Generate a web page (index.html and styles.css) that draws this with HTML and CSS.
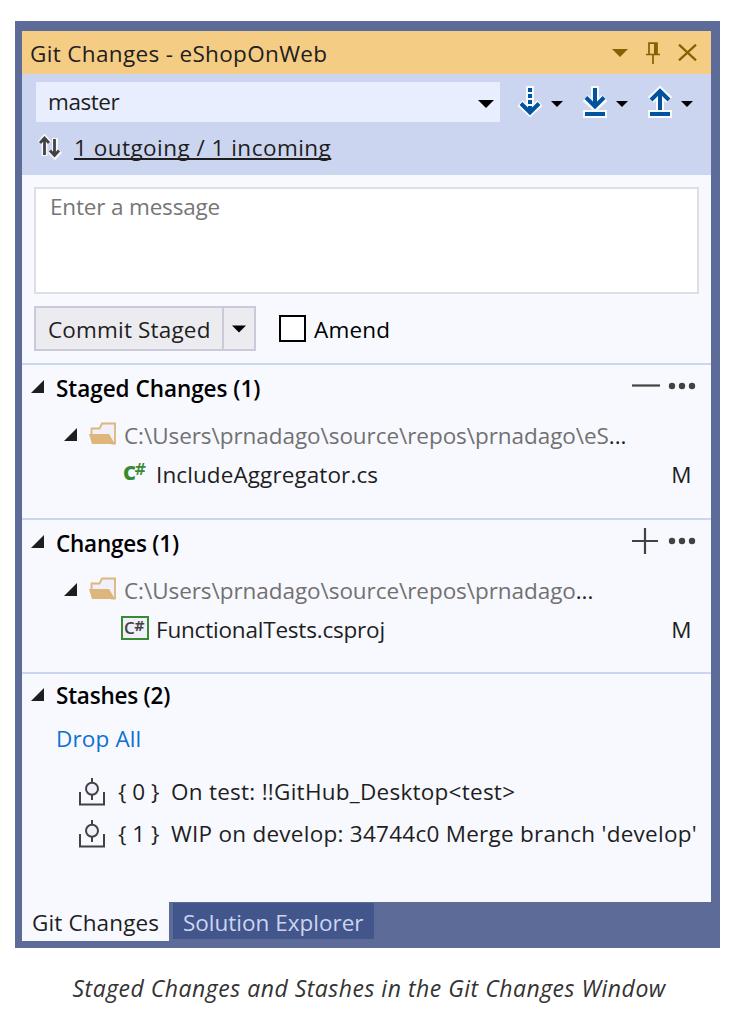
FILE: index.html
```html
<!DOCTYPE html>
<html lang="en">
<head>
<meta charset="utf-8">
<title>Git Changes</title>
<link rel="stylesheet" href="styles.css">
</head>
<body>
<svg class="defs" aria-hidden="true">
  <symbol id="folder" viewBox="0 0 28 24">
    <path d="M2.500 14V7.500h8l2.500-5h13v20h-3z" fill="#f0effa" stroke="#dcb67a" stroke-width="1.800"/>
    <path d="M0 13h20l6 10H3z" fill="#dcb67a"/>
  </symbol>
  <symbol id="stash" viewBox="0 0 26 28">
    <path d="M1 14v12.500h24V14M13 0v4.500M13 17v5" fill="none" stroke="#424242" stroke-width="2"/>
    <circle cx="13" cy="10.700" r="6" fill="#f0effa" stroke="#424242" stroke-width="2"/>
  </symbol>
  <symbol id="dots" viewBox="0 0 28 8">
    <circle cx="4" cy="4" r="3.200"/><circle cx="14" cy="4" r="3.200"/><circle cx="24" cy="4" r="3.200"/>
  </symbol>
  <symbol id="caret" viewBox="0 0 16 8"><path d="M0 0h16L8 8z"/></symbol>
  <symbol id="expanded" viewBox="0 0 13 13"><path d="M13 0v13H0z"/></symbol>
</svg>
<figure class="figure">
  <div class="window">
    <header class="titlebar">
      <span class="t-title">Git Changes - eShopOnWeb</span>
      <div class="title-actions">
        <svg width="16" height="8"><use href="#caret"/></svg>
        <svg width="14" height="22" viewBox="0 0 14 22" fill="none" stroke="#865f00"><path d="M3 12V1.200h8V12M0 12.500h14M7 13v9" stroke-width="1.700"/><path d="M9.500 1v11" stroke-width="3"/></svg>
        <svg width="19" height="17" viewBox="0 0 19 17"><path d="M1 .7l17 15.600M18 .7L1 16.300" stroke="#865f00" stroke-width="2.300"/></svg>
      </div>
    </header>
    <div class="toolbar">
      <div class="toolbar-row">
        <div class="branch"><span class="t-branch">master</span><svg width="16" height="8"><use href="#caret"/></svg></div>
        <div class="sync">
          <svg class="sync-icon" width="24" height="34" viewBox="0 0 24 34">
            <g fill="none" stroke="#f7f9fe" stroke-width="8"><path d="M12 1v25M2 18l10 9 10-9"/></g>
            <g fill="none" stroke="#00539c" stroke-width="4"><path d="M12 3v4M12 9v4M12 15v4M12 21v6M3 18.500l9 9 9-9"/></g>
          </svg>
          <svg class="small-caret" width="12" height="6"><use href="#caret"/></svg>
          <svg class="sync-icon" width="24" height="34" viewBox="0 0 24 34">
            <g fill="none" stroke="#f7f9fe" stroke-width="8"><path d="M12 1v20M2.500 13L12 22l9.500-9M0 29h24"/></g>
            <g fill="none" stroke="#00539c" stroke-width="4"><path d="M12 3v18M3 12.500l9 9 9-9M2 29h20"/></g>
          </svg>
          <svg class="small-caret" width="12" height="6"><use href="#caret"/></svg>
          <svg class="sync-icon" width="24" height="34" viewBox="0 0 24 34">
            <g fill="none" stroke="#f7f9fe" stroke-width="8"><path d="M12 25V5M2.500 15L12 6l9.500 9M0 29h24"/></g>
            <g fill="none" stroke="#00539c" stroke-width="4"><path d="M12 25V6M3 15l9-9 9 9M2 29h20"/></g>
          </svg>
          <svg class="small-caret" width="12" height="6"><use href="#caret"/></svg>
        </div>
      </div>
      <div class="status">
        <svg width="24" height="26" viewBox="0 0 24 26" fill="none">
          <path d="M6.500 22V4M2 9.500L6.500 4l4.500 5.500M17 4v18M12 17l5 5 5-5" stroke="#f5f6fb" stroke-width="6"/>
          <path d="M6.500 21V4M2 9l4.500-5L11 9M16.500 5v16M12 16.500l4.500 5 4.500-5" stroke="#424242" stroke-width="2.800"/>
        </svg>
        <a class="t-link">1 outgoing / 1 incoming</a>
      </div>
    </div>
    <main class="panel">
      <div class="message"><span class="t-msg">Enter a message</span></div>
      <div class="commit-row">
        <div class="commit"><span class="commit-label t-commit">Commit Staged</span><span class="commit-drop"><svg width="14" height="8"><use href="#caret"/></svg></span></div>
        <span class="checkbox"></span><span class="t-amend">Amend</span>
      </div>
      <section class="section">
        <div class="section-head">
          <svg class="tri" width="13" height="13"><use href="#expanded"/></svg><h2 class="t-staged">Staged Changes (1)</h2>
          <div class="section-actions"><svg width="28" height="28"><path d="M0 13.500h28" stroke="#424242" stroke-width="2.200"/></svg><svg width="28" height="8" fill="#424242"><use href="#dots"/></svg></div>
        </div>
        <div class="row folder-row"><svg class="tri" width="13" height="13"><use href="#expanded"/></svg><svg class="folder" width="28" height="24"><use href="#folder"/></svg><span class="path t-path1">C:\Users\prnadago\source\repos\prnadago\eS<b>...</b></span></div>
        <div class="row file-row"><span class="cs">C<i>#</i></span><span class="t-file1">IncludeAggregator.cs</span><span class="flag">M</span></div>
      </section>
      <section class="section changes">
        <div class="section-head">
          <svg class="tri" width="13" height="13"><use href="#expanded"/></svg><h2 class="t-changes">Changes (1)</h2>
          <div class="section-actions"><svg width="28" height="28"><path d="M0 14h26M13 1v26" stroke="#424242" stroke-width="2.200"/></svg><svg width="28" height="8" fill="#424242"><use href="#dots"/></svg></div>
        </div>
        <div class="row folder-row"><svg class="tri" width="13" height="13"><use href="#expanded"/></svg><svg class="folder" width="28" height="24"><use href="#folder"/></svg><span class="path t-path2">C:\Users\prnadago\source\repos\prnadago<b>...</b></span></div>
        <div class="row file-row"><span class="cs proj">C<i>#</i></span><span class="t-file2">FunctionalTests.csproj</span><span class="flag">M</span></div>
      </section>
      <section class="section stashes">
        <div class="section-head"><svg class="tri" width="13" height="13"><use href="#expanded"/></svg><h2 class="t-stashes">Stashes (2)</h2></div>
        <a class="drop t-drop">Drop All</a>
        <div class="stash-row"><svg width="26" height="28"><use href="#stash"/></svg><span class="index">{ 0 }</span><span class="t-stash">On test: !!GitHub_Desktop&lt;test&gt;</span></div>
        <div class="stash-row"><svg width="26" height="28"><use href="#stash"/></svg><span class="index">{ 1 }</span><span class="t-stash">WIP on develop: 34744c0 Merge branch 'develop'</span></div>
      </section>
    </main>
    <nav class="tabs"><span class="tab active t-tab1">Git Changes</span><span class="tab other">Solution Explorer</span></nav>
  </div>
  <figcaption class="caption">Staged Changes and Stashes in the Git Changes Window</figcaption>
</figure>
</body>
</html>
```
FILE: styles.css
```css
* { box-sizing: border-box; }
body { margin: 0; background: #fff; color: #1e1e1e; font: 22.5px/30px "Open Sans", "Noto Sans", sans-serif; white-space: nowrap; }
svg { display: block; flex: none; }
.defs { display: none; }
.figure { margin: 0; padding: 21px 0 0 15px; }
.window { width: 705px; height: 927px; padding: 10px 9px 0 7px; background: #5d6b99; display: flex; flex-direction: column; }
.titlebar { height: 43px; background: #f5cc84; display: flex; align-items: center; justify-content: space-between; padding: 0 14px 0 8px; }
.title-actions { display: flex; align-items: center; gap: 18px; fill: #865f00; }
.toolbar { height: 101px; background: #ccd5f0; padding: 8px 14px 0; }
.toolbar-row { display: flex; height: 40px; }
.branch { flex: none; width: 464px; background: #e8eefe; display: flex; align-items: center; justify-content: space-between; padding: 0 6px 0 12px; }
.branch svg { margin-top: 3px; }
.sync { display: flex; align-items: center; margin-left: 17.500px; }
.sync-icon { margin: -1px 9.500px 0 0; }
.small-caret { margin: 4px 19.500px 0 0; width: 12px; }
.status { display: flex; align-items: center; height: 30px; margin-top: 10px; padding-left: 2px; }
.status a { margin-left: 12px; padding-top: 1px; text-decoration: underline; text-decoration-thickness: 1.500px; text-underline-offset: 2px; text-decoration-skip-ink: none; }
.panel { height: 727px; background: #f8f9ff; padding-top: 12px; }
.message { width: 665px; height: 107px; margin-left: 12px; padding: 3px 14px; border: 2px solid #dcdee8; background: #fff; color: #767676; }
.commit-row { display: flex; align-items: center; margin: 12px 0 12px 12px; height: 45px; color: #000; }
.commit { display: flex; width: 222px; height: 45px; border: 2px solid #c9cbdb; background: #ececf0; color: #1e1e1e; }
.commit-label { width: 188px; padding: 7px 0 0 12px; border-right: 2px solid #c9cbdb; }
.commit-drop { flex: 1; display: flex; align-items: center; justify-content: center; }
.checkbox { width: 27px; height: 27px; margin: 0 8px 0 23px; border: 2px solid #000; background: #fff; }
.section { height: 155px; border-top: 2px solid #ccd5f0; }
.changes { height: 154px; }
.section-head { height: 45px; display: flex; align-items: center; padding: 0 15px 0 9px; }
.section-head .tri { margin-top: -2px; }
.section-head h2 { margin: 0 0 0 12px; padding-top: 2px; font-size: 22.5px; font-weight: 600; color: #000; }
.section-actions { margin: -4px 0 0 auto; display: flex; align-items: center; gap: 8px; }
.tri { fill: #1e1e1e; }
.row { height: 40px; display: flex; align-items: center; }
.folder-row { margin-top: 5px; padding-left: 42px; }
.folder-row .tri { margin-top: -2px; }
.folder { margin: -4px 7px 0 12px; }
.path { padding-top: 2px; color: #717171; }
.path b { font-weight: 400; color: #1e1e1e; }
.file-row { padding: 0 19.500px 0 99px; }
.cs { width: 28px; height: 24px; margin: -4px 7px 0 0; padding-left: 2px; font: 800 20px/23px "Open Sans", sans-serif; color: #388a34; letter-spacing: -2px; display: flex; }
.cs i { font: 700 15px/18px "DejaVu Sans", sans-serif; }
.proj { border: 2px solid #388a34; padding-left: 1px; color: #424242; font-size: 17px; font-weight: 600; line-height: 19px; letter-spacing: -1px; background: #f0effa; }
.proj i { font-size: 13.500px; line-height: 17px; }
.flag { margin-left: auto; }
.stashes .section-head { height: 42px; }
.drop { display: block; margin: 3px 0 12px 34px; line-height: 40px; color: #0e70d1; }
.stash-row { height: 42px; display: flex; align-items: center; padding-left: 57px; }
.index { width: 53px; margin-left: 13px; }
.tabs { height: 46px; display: flex; }
.tab { line-height: 42px; }
.active { width: 147px; height: 39px; padding-left: 10px; background: #f8f9ff; }
.other { width: 201px; height: 36px; margin: 1px 0 0 4px; padding-left: 10px; line-height: 40px; background: #42568c; color: #ccd5f0; }
.caption { padding: 25px 0 0 57.500px; font-size: 23px; font-style: italic; letter-spacing: .5px; color: #333; }

/* Text tracking */
.t-title { padding-top: 2px; letter-spacing: .34px; }
.t-branch { letter-spacing: -.45px; }
.t-link { letter-spacing: .47px; }
.t-msg { letter-spacing: -.17px; }
.t-commit { letter-spacing: .17px; }
.t-amend { padding-top: 2px; letter-spacing: .2px; }
.t-staged { letter-spacing: -.03px; }
.t-changes, .t-stashes { letter-spacing: -.22px; }
.t-path1, .t-path2 { letter-spacing: -.06px; }
.t-file1 { letter-spacing: .1px; }
.t-file2 { letter-spacing: -.2px; }
.t-drop { letter-spacing: .15px; }
.t-stash { letter-spacing: .26px; }
.t-tab1 { letter-spacing: .12px; }
```
